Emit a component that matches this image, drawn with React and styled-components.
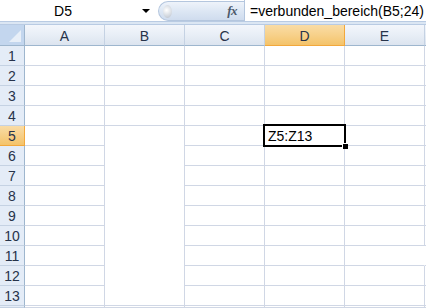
import React from "react";
import styled, { createGlobalStyle } from "styled-components";

const GlobalStyle = createGlobalStyle`
  html, body {
    margin: 0;
    padding: 0;
    background: #ffffff;
  }
  body {
    font-family: "Liberation Sans", Arial, sans-serif;
    color: #000;
  }
`;

const Window = styled.div`
  width: 426px;
  height: 308px;
  overflow: hidden;
  background: #fff;
`;

const FormulaBar = styled.div`
  display: flex;
  align-items: stretch;
  height: 21px;
  border-bottom: 1px solid #b9cbe3;
  background: #fff;
`;

const NameBox = styled.div`
  width: 158px;
  display: flex;
  align-items: center;
  font-size: 14px;
  color: #000;
`;

const NameText = styled.span`
  flex: 1;
  text-align: center;
  padding-right: 16px;
`;

const DropArrow = styled.span`
  width: 0;
  height: 0;
  border-left: 4px solid transparent;
  border-right: 4px solid transparent;
  border-top: 4px solid #000;
  margin-right: 8px;
  margin-top: 1px;
`;

const Pill = styled.div`
  width: 86px;
  margin-top: 1px;
  display: flex;
  align-items: center;
  justify-content: space-between;
  border-radius: 11px 0 0 11px;
  border: 1px solid #b4c6de;
  border-right: none;
  background: linear-gradient(to bottom, #eef3fa 0%, #dde7f4 50%, #cfdcee 100%);
  box-sizing: border-box;
`;

const Knob = styled.span`
  width: 9px;
  height: 13px;
  margin-left: 4px;
  border-radius: 50%;
  background: radial-gradient(circle at 40% 40%, #ffffff 0%, #d4d9e0 60%, #b8bec7 100%);
`;

const Fx = styled.span`
  font-family: "Liberation Serif", "Times New Roman", serif;
  font-style: italic;
  font-weight: bold;
  font-size: 13px;
  color: #4d5a6c;
  margin-right: 7px;
  letter-spacing: -0.5px;
`;

const FormulaInput = styled.div`
  flex: 1;
  display: flex;
  align-items: center;
  padding-left: 5px;
  font-size: 14px;
  border-left: 1px solid #b4c6de;
  white-space: nowrap;
`;

const Band = styled.div`
  height: 2px;
  background: #dbe6f3;
  border-bottom: 1px solid #b9cbe3;
`;

const Sheet = styled.div`
  display: grid;
  grid-template-columns: 25px repeat(5, 80px) 1fr;
  grid-template-rows: 21px repeat(13, 20px) 1fr;
  font-size: 14px;
`;

const Corner = styled.div`
  box-sizing: border-box;
  border-right: 1px solid #9eb6ce;
  border-bottom: 1px solid #9eb6ce;
  background: #c3d6ee;
  position: relative;
  &::after {
    content: "";
    position: absolute;
    right: 3px;
    bottom: 3px;
    width: 0;
    height: 0;
    border-left: 12px solid transparent;
    border-bottom: 12px solid #e8eff8;
  }
`;

const ColHead = styled.div`
  box-sizing: border-box;
  display: flex;
  align-items: center;
  justify-content: center;
  border-right: 1px solid ${(p) => (p.$active ? "#f2a83c" : "#c5d2e3")};
  border-bottom: 1px solid ${(p) => (p.$active ? "#f2a83c" : "#9eb6ce")};
  background: ${(p) =>
    p.$active
      ? "linear-gradient(to bottom, #f9dca6 0%, #f7d18a 50%, #f4c36a 100%)"
      : "linear-gradient(to bottom, #f3f6fb 0%, #e8eef6 50%, #dce4ef 100%)"};
  color: #27334a;
  padding-top: 1px;
`;

const RowHead = styled.div`
  box-sizing: border-box;
  display: flex;
  align-items: center;
  justify-content: center;
  border-right: 1px solid ${(p) => (p.$active ? "#f2a83c" : "#9eb6ce")};
  border-bottom: 1px solid ${(p) => (p.$active ? "#f2a83c" : "#c5d2e3")};
  background: ${(p) =>
    p.$active
      ? "linear-gradient(to bottom, #f9dca6 0%, #f4c36a 100%)"
      : "#e4ecf7"};
  color: #27334a;
  padding-top: 1px;
`;

const Cell = styled.div`
  box-sizing: border-box;
  border-right: 1px solid ${(p) => (p.$noRight ? "transparent" : "#d0d7e5")};
  border-bottom: 1px solid #d0d7e5;
  background: #fff;
  display: flex;
  align-items: center;
  padding-left: 3px;
  white-space: nowrap;
  grid-row: ${(p) => (p.$rowSpan ? `span ${p.$rowSpan}` : "auto")};
  position: relative;
`;

const ActiveCell = styled(Cell)`
  z-index: 2;
  &::before {
    content: "";
    position: absolute;
    left: -2px;
    top: -2px;
    right: -2px;
    bottom: -2px;
    border: 2px solid #000;
    pointer-events: none;
  }
  &::after {
    content: "";
    position: absolute;
    right: -4px;
    bottom: -4px;
    width: 5px;
    height: 5px;
    background: #000;
    border: 1px solid #fff;
    border-right: none;
    border-bottom: none;
  }
`;

const columns = ["A", "B", "C", "D", "E"];

export default function App() {
  const rows = Array.from({ length: 13 }, (_, i) => i + 1);
  return (
    <Window>
      <GlobalStyle />
      <FormulaBar>
        <NameBox>
          <NameText>D5</NameText>
          <DropArrow />
        </NameBox>
        <Pill>
          <Knob />
          <Fx>fx</Fx>
        </Pill>
        <FormulaInput>=verbunden_bereich(B5;24)</FormulaInput>
      </FormulaBar>
      <Band />
      <Sheet>
        <Corner />
        {columns.map((c) => (
          <ColHead key={c} $active={c === "D"}>
            {c}
          </ColHead>
        ))}
        <ColHead />
        {rows.map((r) => (
          <React.Fragment key={r}>
            <RowHead $active={r === 5}>{r}</RowHead>
            {columns.map((c) => {
              if (c === "B" && r > 5) return null;
              if (c === "B" && r === 5) return <Cell key={c} $rowSpan={9} />;
              if (c === "D" && r === 5)
                return <ActiveCell key={c}>Z5:Z13</ActiveCell>;
              return <Cell key={c} $noRight={c === "E" && r === 11} />;
            })}
            <Cell />
          </React.Fragment>
        ))}
        <RowHead />
        {columns.map((c) => (
          <Cell key={c} />
        ))}
        <Cell />
      </Sheet>
    </Window>
  );
}
